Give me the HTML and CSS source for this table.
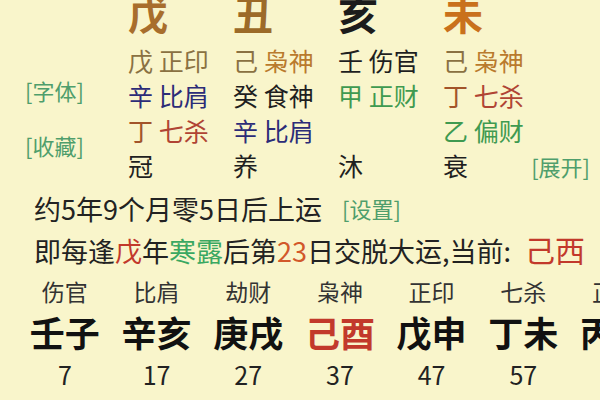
FILE: index.html
```html
<!DOCTYPE html>
<html lang="zh-CN">
<head>
<meta charset="utf-8">
<title>八字排盘</title>
<link rel="stylesheet" href="styles.css">
</head>
<body>
<div class="page">
  <div class="chart">
    <div></div>
    <div class="big c-wu">戊</div>
    <div class="big c-chou">丑</div>
    <div class="big c-hai">亥</div>
    <div class="big c-wei">未</div>

    <div class="side">
      <span class="link">[字体]</span>
      <span class="link">[收藏]</span>
    </div>

    <div class="cell"><span class="olive">戊</span> <span class="olive">正印</span></div>
    <div class="cell"><span class="olive">己</span> <span class="amber">枭神</span></div>
    <div class="cell"><span class="ink">壬</span> <span class="ink">伤官</span></div>
    <div class="cell"><span class="olive">己</span> <span class="amber">枭神</span></div>

    <div class="cell"><span class="navy">辛</span> <span class="navy">比肩</span></div>
    <div class="cell"><span class="ink">癸</span> <span class="ink">食神</span></div>
    <div class="cell"><span class="green">甲</span> <span class="green">正财</span></div>
    <div class="cell"><span class="rust">丁</span> <span class="brick">七杀</span></div>

    <div class="cell"><span class="rust">丁</span> <span class="brick">七杀</span></div>
    <div class="cell"><span class="navy">辛</span> <span class="navy">比肩</span></div>
    <div class="cell"></div>
    <div class="cell"><span class="green">乙</span> <span class="green">偏财</span></div>

    <div class="cell ink">冠</div>
    <div class="cell ink">养</div>
    <div class="cell ink">沐</div>
    <div class="cell last"><span class="ink">衰</span><span class="link">[展开]</span></div>
  </div>

  <div class="info">
    <p class="line">约5年9个月零5日后上运<span class="link set">[设置]</span></p>
    <p class="line">即每逢<span class="red">戊</span>年<span class="jade">寒露</span>后第<span class="orange">23</span>日交脱大运,当前: <span class="now">己西</span></p>
  </div>

  <div class="dayun">
    <div class="col"><span class="god">伤官</span><span class="gz">壬子</span><span class="age">7</span></div>
    <div class="col"><span class="god">比肩</span><span class="gz">辛亥</span><span class="age">17</span></div>
    <div class="col"><span class="god">劫财</span><span class="gz">庚戌</span><span class="age">27</span></div>
    <div class="col"><span class="god">枭神</span><span class="gz red">己酉</span><span class="age">37</span></div>
    <div class="col"><span class="god">正印</span><span class="gz">戊申</span><span class="age">47</span></div>
    <div class="col"><span class="god">七杀</span><span class="gz">丁未</span><span class="age">57</span></div>
    <div class="col"><span class="god">正官</span><span class="gz">丙午</span><span class="age">67</span></div>
  </div>
</div>
</body>
</html>
```

FILE: styles.css
```css
html, body {
  margin: 0;
  padding: 0;
}

body {
  background: #f9f5cb;
  font-family: "Noto Sans CJK SC", "Noto Sans", sans-serif;
  color: #222;
  width: 600px;
  height: 400px;
  overflow: hidden;
}

.page {
  width: 600px;
}

.chart {
  display: grid;
  grid-template-columns: 128px 105px 105px 105px 1fr;
  grid-template-rows: 43px repeat(4, 35px);
  width: 590px;
}

.big {
  font-size: 40px;
  font-weight: 700;
  line-height: 26px;
  align-self: start;
}

.c-wu { color: #a86e2c; }
.c-chou { color: #9c6a28; }
.c-hai { color: #1c1c1c; }
.c-wei { color: #c9711c; }

.side {
  grid-column: 1;
  grid-row: 2 / 6;
  display: flex;
  flex-direction: column;
  align-items: flex-start;
  gap: 31px;
  padding: 35px 0 0 25px;
}

.link {
  font-size: 22px;
  line-height: 24px;
  color: #4f9e6c;
}

.cell {
  font-size: 25px;
  line-height: 35px;
  white-space: nowrap;
}

.cell.last {
  display: flex;
  justify-content: space-between;
  align-items: center;
}

.olive { color: #8a7142; }
.amber { color: #b97a2d; }
.ink { color: #1f1f1f; }
.navy { color: #2c2c78; }
.green { color: #3f9a50; }
.rust { color: #a2542a; }
.brick { color: #b04434; }

.info {
  padding: 6px 0 0 34px;
}

.line {
  margin: 0;
  font-size: 27px;
  line-height: 40px;
  white-space: nowrap;
}

.set {
  margin-left: 20px;
  vertical-align: 2px;
}

.red { color: #c2392b; }
.jade { color: #3aa862; }
.orange { color: #d2582a; }

.now {
  color: #c2392b;
  font-size: 30px;
  margin-left: 8px;
}

.dayun {
  display: grid;
  grid-template-columns: repeat(7, 91.7px);
  margin-left: 19px;
}

.col {
  display: flex;
  flex-direction: column;
  align-items: center;
  white-space: nowrap;
}

.god {
  font-size: 23px;
  line-height: 40px;
  color: #333;
}

.gz {
  font-size: 35px;
  font-weight: 700;
  line-height: 42px;
  color: #111;
}

.gz.red { color: #c2392b; }

.age {
  font-size: 25px;
  line-height: 42px;
  color: #222;
}
```
